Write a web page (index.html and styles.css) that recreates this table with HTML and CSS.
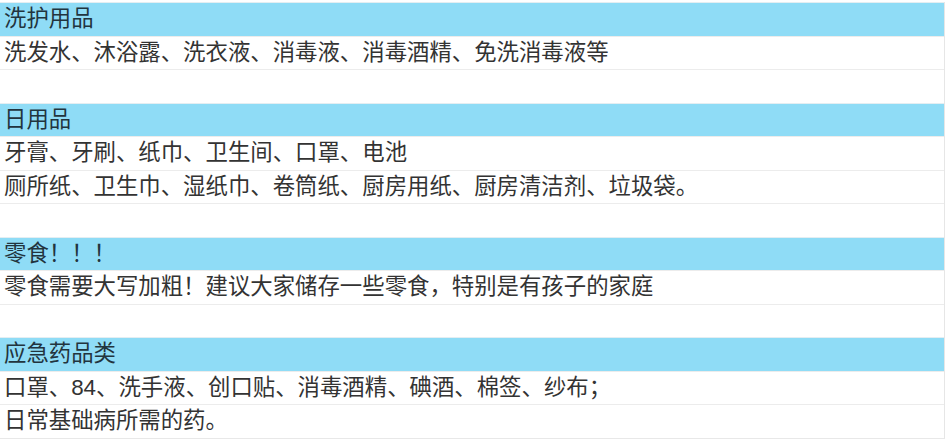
FILE: index.html
```html
<!DOCTYPE html>
<html lang="zh-CN">
<head>
<meta charset="utf-8">
<link rel="stylesheet" href="styles.css">
</head>
<body>
<div class="sheet">
  <div class="row head">洗护用品</div>
  <div class="row">洗发水、沐浴露、洗衣液、消毒液、消毒酒精、免洗消毒液等</div>
  <div class="row"></div>
  <div class="row head">日用品</div>
  <div class="row">牙膏、牙刷、纸巾、卫生间、口罩、电池</div>
  <div class="row">厕所纸、卫生巾、湿纸巾、卷筒纸、厨房用纸、厨房清洁剂、垃圾袋。</div>
  <div class="row"></div>
  <div class="row head">零食！！！</div>
  <div class="row">零食需要大写加粗！建议大家储存一些零食，特别是有孩子的家庭</div>
  <div class="row"></div>
  <div class="row head">应急药品类</div>
  <div class="row">口罩、84、洗手液、创口贴、消毒酒精、碘酒、棉签、纱布；</div>
  <div class="row">日常基础病所需的药。</div>
</div>
</body>
</html>
```
FILE: styles.css
```css
html, body {
  margin: 0;
  padding: 0;
  background: #ffffff;
}
body {
  font-family: "Liberation Sans", "Noto Sans CJK SC", sans-serif;
  color: #333333;
}
.sheet {
  width: 944px;
  margin-top: 2px;
  border-right: 1px solid #e6e6e6;
  border-bottom: 1px solid #e8e8e8;
  display: flex;
  flex-direction: column;
}
.row {
  box-sizing: border-box;
  height: 33.5px;
  border-top: 1.5px solid #ececec;
  padding-left: 4px;
  font-size: 22.4px;
  line-height: 31px;
  white-space: nowrap;
  background: #ffffff;
}
.row.head {
  background: #8fdcf6;
  border-top-color: #e4eef2;
  color: #22343e;
}
```
